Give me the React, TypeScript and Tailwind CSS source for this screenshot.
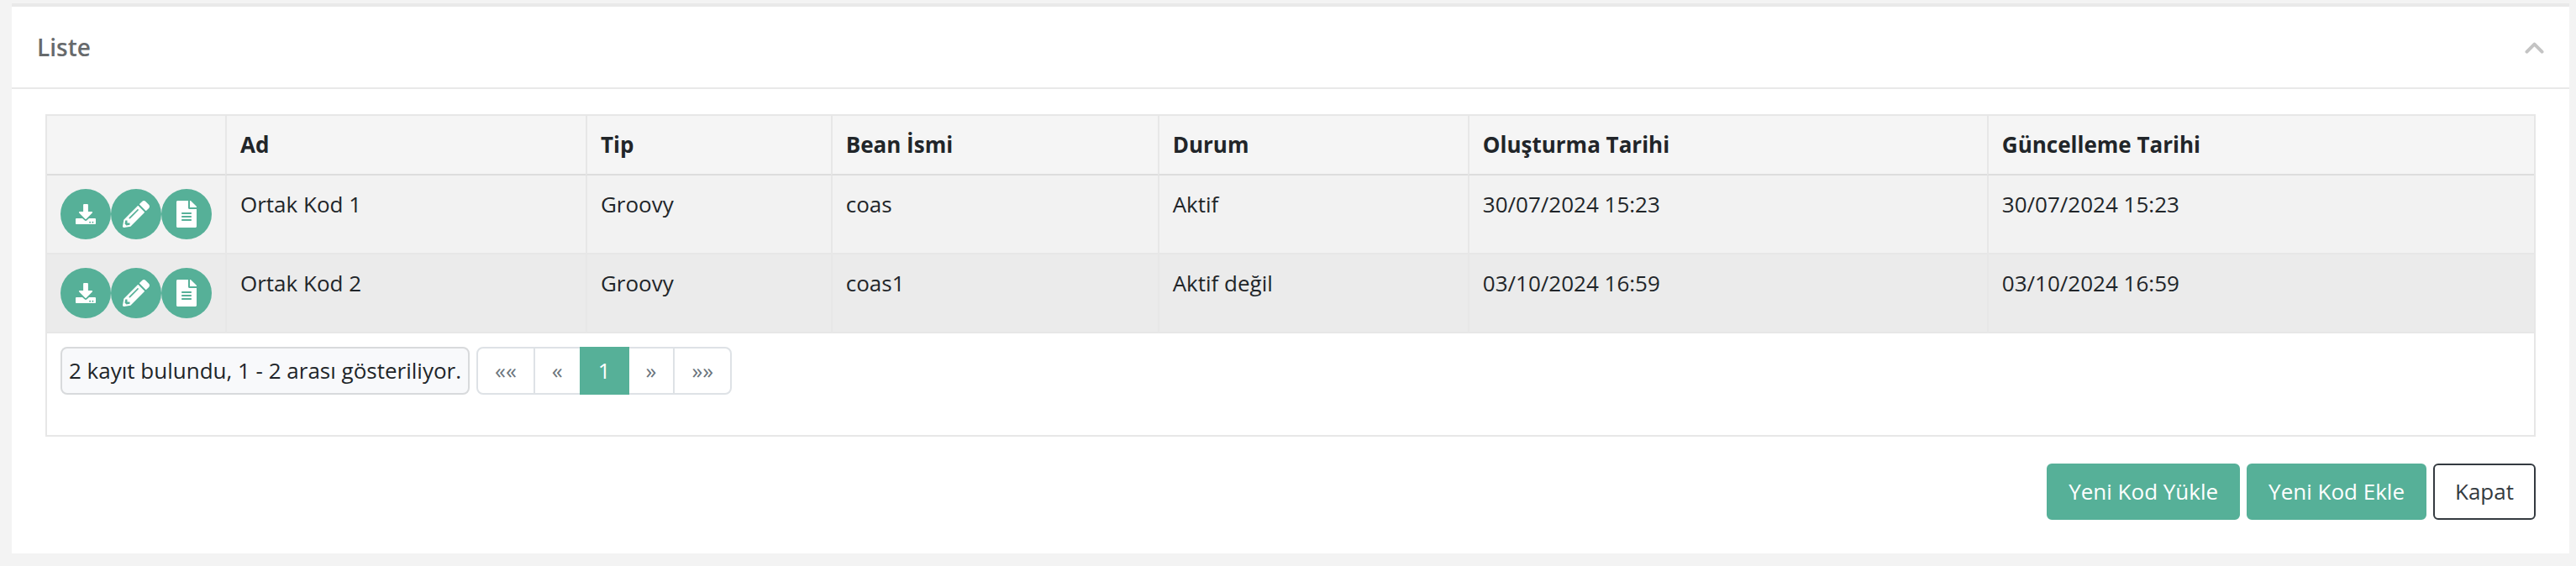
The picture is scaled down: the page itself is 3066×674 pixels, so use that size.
import React from "react";

type Row = {
  name: string;
  type: string;
  bean: string;
  status: string;
  created: string;
  updated: string;
};

const rows: Row[] = [
  { name: "Ortak Kod 1", type: "Groovy", bean: "coas", status: "Aktif", created: "30/07/2024 15:23", updated: "30/07/2024 15:23" },
  { name: "Ortak Kod 2", type: "Groovy", bean: "coas1", status: "Aktif değil", created: "03/10/2024 16:59", updated: "03/10/2024 16:59" },
];

const columns = ["Ad", "Tip", "Bean İsmi", "Durum", "Oluşturma Tarihi", "Güncelleme Tarihi"];

function DownloadIcon() {
  return (
    <svg viewBox="0 0 24 24" className="size-6" aria-hidden="true">
      <path
        fill="#fff"
        d="M10.200 0h3.600c.6 0 1.100.5 1.100 1.100V9h4.300c.8 0 1.200 1 .6 1.600l-7.200 7.200a.9.9 0 0 1-1.200 0l-7.200-7.200C3.600 10 4 9 4.800 9h4.300V1.100C9.100.5 9.600 0 10.200 0z"
      />
      <path
        fill="#fff"
        fillRule="evenodd"
        d="M1.100 16.900H8l2.300 2.200a2.500 2.500 0 0 0 3.500 0l2.200-2.200h6.900c.6 0 1.100.5 1.100 1.100v4.900c0 .6-.5 1.100-1.100 1.100H1.100C.5 24 0 23.500 0 22.900V18c0-.6.5-1.100 1.100-1.100zM17.100 20.800a.9.9 0 1 0 0 1.900.9.9 0 0 0 0-1.900zm3.300 0a.9.9 0 1 0 0 1.900.9.9 0 0 0 0-1.900z"
      />
    </svg>
  );
}

function PencilIcon() {
  return (
    <svg viewBox="0 0 512 512" className="size-8" aria-hidden="true">
      <path
        fill="#fff"
        d="M497.900 142.100l-46.100 46.100c-4.700 4.700-12.300 4.700-17 0l-111-111c-4.700-4.700-4.700-12.300 0-17l46.100-46.100c18.700-18.700 49.100-18.700 67.900 0l60.100 60.100c18.800 18.700 18.800 49.100 0 67.900zM284.200 99.800L21.600 362.400.4 483.900c-2.900 16.400 11.400 30.600 27.800 27.800l121.500-21.300 262.600-262.600c4.700-4.700 4.700-12.300 0-17l-111-111c-4.800-4.700-12.400-4.700-17.100 0zM124.100 339.900c-5.500-5.500-5.500-14.300 0-19.800l154-154c5.500-5.500 14.300-5.500 19.800 0s5.500 14.300 0 19.800l-154 154c-5.500 5.500-14.300 5.500-19.800 0zM88 424h48v36.300l-64.500 11.300-31.100-31.100L51.700 376H88v48z"
      />
    </svg>
  );
}

function FileIcon() {
  return (
    <svg viewBox="0 0 384 512" className="h-8 w-6" aria-hidden="true">
      <path
        fill="#fff"
        d="M224 136V0H24C10.700 0 0 10.700 0 24v464c0 13.300 10.700 24 24 24h336c13.300 0 24-10.700 24-24V160H248c-13.200 0-24-10.800-24-24zm64 236c0 6.600-5.400 12-12 12H108c-6.600 0-12-5.400-12-12v-8c0-6.600 5.400-12 12-12h168c6.600 0 12 5.400 12 12v8zm0-64c0 6.600-5.400 12-12 12H108c-6.600 0-12-5.400-12-12v-8c0-6.600 5.400-12 12-12h168c6.600 0 12 5.400 12 12v8zm0-72v8c0 6.600-5.400 12-12 12H108c-6.600 0-12-5.400-12-12v-8c0-6.600 5.400-12 12-12h168c6.600 0 12 5.400 12 12zm96-114.100v6.100H256V0h6.100c6.400 0 12.500 2.500 17 7l97.900 98c4.500 4.500 7 10.600 7 16.900z"
      />
    </svg>
  );
}

function RoundButton({ label, children }: { label: string; children: React.ReactNode }) {
  return (
    <button type="button" aria-label={label} className="flex size-[60px] items-center justify-center rounded-full bg-[#56b098]">
      {children}
    </button>
  );
}

const pageBase = "-ml-0.5 border-2 border-[#dee2e6] bg-white px-5 py-2 text-[#6c757d] first:ml-0 first:rounded-l-lg last:rounded-r-lg";

function Pager() {
  return (
    <nav aria-label="Sayfalar" className="flex">
      <button type="button" className={pageBase}>««</button>
      <button type="button" className={pageBase}>«</button>
      <button type="button" aria-current="page" className="z-10 -ml-0.5 border-2 border-[#56b098] bg-[#56b098] px-5 py-2 text-white">1</button>
      <button type="button" className={pageBase}>»</button>
      <button type="button" className={pageBase}>»»</button>
    </nav>
  );
}

export default function App() {
  return (
    <div className="min-h-screen bg-[#f3f3f3] pt-1 pr-2 pb-4 pl-3.5 font-['Open_Sans',sans-serif] text-[26px] leading-[37px] text-[#212529]">
      <section className="border-t-4 border-[#e9e9e9] bg-white">
        <header className="flex items-center justify-between border-b-2 border-[#e9e9e9] px-[30px] py-[29px]">
          <h2 className="text-[28px] leading-[38px] font-semibold text-[#676a6c]">Liste</h2>
          <button type="button" aria-label="Daralt">
            <svg viewBox="0 0 24 16" className="h-4 w-6" aria-hidden="true">
              <path d="M3.500 13.700l9-9 9 9" fill="none" stroke="#c4c4c4" strokeWidth="4" strokeLinecap="round" strokeLinejoin="round" />
            </svg>
          </button>
        </header>

        <div className="px-10 pt-[30px] pb-10">
          <div className="border-2 border-[#e7e7e7]">
            <table className="w-full table-fixed border-separate border-spacing-0 text-left">
              <colgroup>
                <col className="w-[212px]" />
                <col className="w-[14.49%]" />
                <col className="w-[9.86%]" />
                <col className="w-[13.14%]" />
                <col className="w-[12.47%]" />
                <col className="w-[20.88%]" />
                <col />
              </colgroup>
              <thead>
                <tr className="bg-[#f5f5f5]">
                  <th className="border-b-2 border-b-[#dddddd]" aria-label="İşlemler" />
                  {columns.map((c) => (
                    <th key={c} className="border-b-2 border-l-2 border-b-[#dddddd] border-l-[#e7e7e7] p-4 font-bold">
                      {c}
                    </th>
                  ))}
                </tr>
              </thead>
              <tbody>
                {rows.map((r) => (
                  <tr key={r.name} className="bg-[#f2f2f2] align-top even:bg-[#ebebeb]">
                    <td className="border-b-2 border-[#e7e7e7] p-4">
                      <div className="flex">
                        <RoundButton label="İndir"><DownloadIcon /></RoundButton>
                        <RoundButton label="Düzenle"><PencilIcon /></RoundButton>
                        <RoundButton label="Görüntüle"><FileIcon /></RoundButton>
                      </div>
                    </td>
                    {[r.name, r.type, r.bean, r.status, r.created, r.updated].map((v, i) => (
                      <td key={i} className="border-b-2 border-l-2 border-[#e7e7e7] p-4">{v}</td>
                    ))}
                  </tr>
                ))}
              </tbody>
            </table>
            <div className="flex gap-2 px-4 pt-4 pb-12">
              <p className="rounded-lg border-2 border-[#d8dadc] bg-[#f8f9fb] px-2 py-2">
                2 kayıt bulundu, 1 - 2 arası gösteriliyor.
              </p>
              <Pager />
            </div>
          </div>

          <div className="mt-8 flex justify-end gap-2 leading-[39px]">
            <button type="button" className="rounded-md border-2 border-[#56b098] bg-[#56b098] px-6 py-3 text-white">Yeni Kod Yükle</button>
            <button type="button" className="rounded-md border-2 border-[#56b098] bg-[#56b098] px-6 py-3 text-white">Yeni Kod Ekle</button>
            <button type="button" className="rounded-md border-2 border-[#343a40] bg-white px-6 py-3 text-[#343a40]">Kapat</button>
          </div>
        </div>
      </section>
    </div>
  );
}
